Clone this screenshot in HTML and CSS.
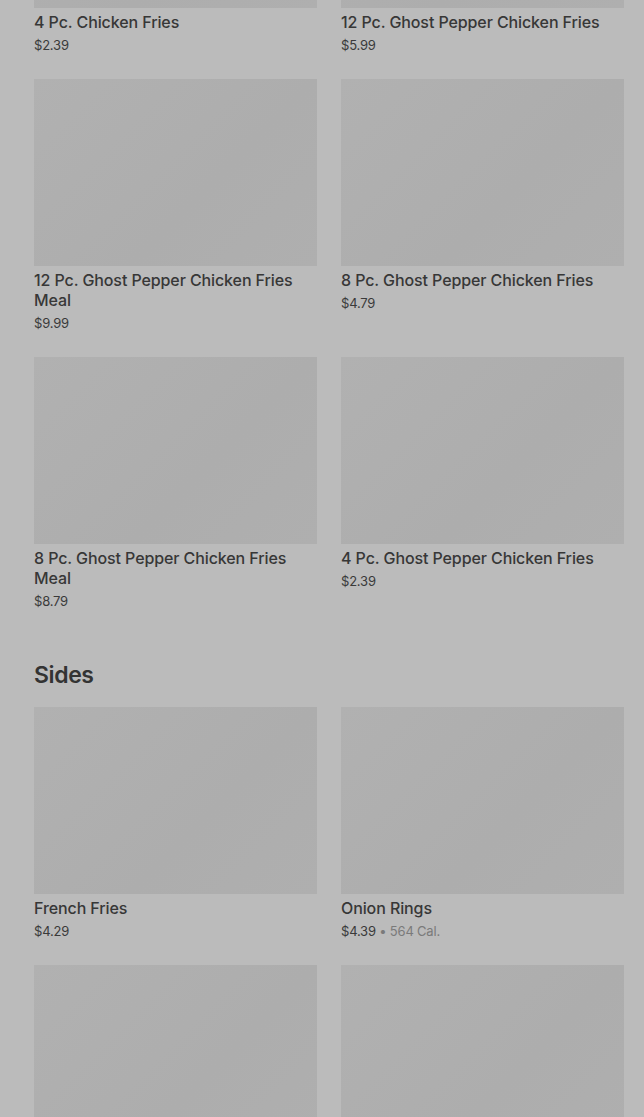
FILE: index.html
```html
<!DOCTYPE html>
<html lang="en">
<head>
    <meta charset="UTF-8">
    <meta name="viewport" content="width=device-width, initial-scale=1.0">
    <title>Menu</title>
    <link rel="stylesheet" href="styles.css">
</head>
<body>
<div class="menu">
    <section class="category">
        <div class="items">
            <div class="item">
                <div class="thumb"></div>
                <div class="name">4 Pc. Chicken Fries</div>
                <div class="price">$2.39</div>
            </div>
            <div class="item">
                <div class="thumb"></div>
                <div class="name">12 Pc. Ghost Pepper Chicken Fries</div>
                <div class="price">$5.99</div>
            </div>
            <div class="item">
                <div class="thumb"></div>
                <div class="name">12 Pc. Ghost Pepper Chicken Fries Meal</div>
                <div class="price">$9.99</div>
            </div>
            <div class="item">
                <div class="thumb"></div>
                <div class="name">8 Pc. Ghost Pepper Chicken Fries</div>
                <div class="price">$4.79</div>
            </div>
            <div class="item">
                <div class="thumb"></div>
                <div class="name">8 Pc. Ghost Pepper Chicken Fries Meal</div>
                <div class="price">$8.79</div>
            </div>
            <div class="item">
                <div class="thumb"></div>
                <div class="name">4 Pc. Ghost Pepper Chicken Fries</div>
                <div class="price">$2.39</div>
            </div>
        </div>
    </section>

    <section class="category">
        <h2>Sides</h2>
        <div class="items">
            <div class="item">
                <div class="thumb"></div>
                <div class="name">French Fries</div>
                <div class="price">$4.29</div>
            </div>
            <div class="item">
                <div class="thumb"></div>
                <div class="name">Onion Rings</div>
                <div class="price">$4.39 <span class="cal">&bull; 564 Cal.</span></div>
            </div>
            <div class="item">
                <div class="thumb"></div>
            </div>
            <div class="item">
                <div class="thumb"></div>
            </div>
        </div>
    </section>
</div>
</body>
</html>
```

FILE: styles.css
```css
/* Page under a dimmed overlay */
body {
    background-color: #bbbbbb;
    color: #353535;
    font-family: 'Inter', 'Liberation Sans', sans-serif;
    margin: 0;
    overflow: hidden;
}

.menu {
    margin-top: -179px; /* scrolled list */
    padding: 0 20px 0 34px;
}

.category + .category {
    margin-top: 48px;
}

.category h2 {
    margin: 0 0 16px;
    font-size: 23px;
    line-height: 32px;
    font-weight: 600;
    letter-spacing: -0.4px;
    color: #333333;
}

.items {
    display: grid;
    grid-template-columns: 1fr 1fr;
    column-gap: 24px;
    row-gap: 24px;
}

.thumb {
    height: 187px;
    background: linear-gradient(135deg, #b1b1b1, #adadad 60%, #afafaf);
}

.name {
    margin-top: 4px;
    font-size: 16px;
    line-height: 20px;
    font-weight: 500;
    letter-spacing: -0.1px;
    color: #373737;
}

.price {
    margin-top: 3px;
    font-size: 13px;
    line-height: 20px;
    color: #3a3a3a;
    letter-spacing: -0.2px;
}

.cal {
    color: #7a7a7a;
}
```
